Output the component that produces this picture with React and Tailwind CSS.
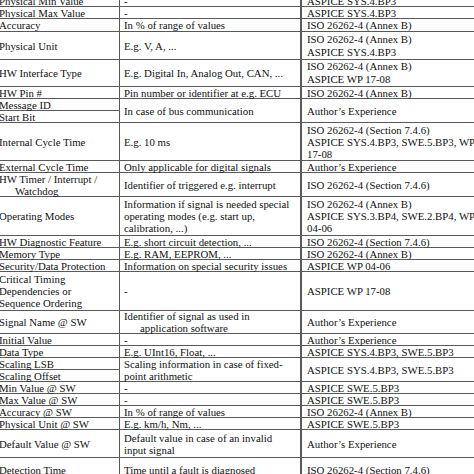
const rows = [
  { a: 'Physical Min Value', b: '-', c: ['ASPICE SYS.4.BP3'] },
  { a: 'Physical Max Value', b: '-', c: ['ASPICE SYS.4.BP3'] },
  { a: 'Accuracy', b: 'In % of range of values', c: ['ISO 26262-4 (Annex B)'] },
  { a: 'Physical Unit', b: 'E.g. V, A, ...', c: ['ISO 26262-4 (Annex B)', 'ASPICE SYS.4.BP3'], tall: true },
  { a: 'HW Interface Type', b: 'E.g. Digital In, Analog Out, CAN, ...', c: ['ISO 26262-4 (Annex B)', 'ASPICE WP 17-08'], tall: true },
  { a: 'HW Pin #', b: 'Pin number or identifier at e.g. ECU', c: ['ISO 26262-4 (Annex B)'] },
  { a: 'Message ID', b: 'In case of bus communication', c: ['Author’s Experience'], span: true },
  { a: 'Start Bit', only: true },
  { a: 'Internal Cycle Time', b: 'E.g. 10 ms', c: ['ISO 26262-4 (Section 7.4.6)', 'ASPICE SYS.4.BP3, SWE.5.BP3, WP', '17-08'] },
  { a: 'External Cycle Time', b: 'Only applicable for digital signals', c: ['Author’s Experience'] },
  { a: ['HW Timer / Interrupt /', 'Watchdog'], indentA: true, b: 'Identifier of triggered e.g. interrupt', c: ['ISO 26262-4 (Section 7.4.6)'] },
  { a: 'Operating Modes', b: ['Information if signal is needed special', 'operating modes (e.g. start up,', 'calibration, ...)'], c: ['ISO 26262-4 (Annex B)', 'ASPICE SYS.3.BP4, SWE.2.BP4, WP', '04-06'] },
  { a: 'HW Diagnostic Feature', b: 'E.g. short circuit detection, ...', c: ['ISO 26262-4 (Section 7.4.6)'] },
  { a: 'Memory Type', b: 'E.g. RAM, EEPROM, ...', c: ['ISO 26262-4 (Annex B)'] },
  { a: 'Security/Data Protection', b: 'Information on special security issues', c: ['ASPICE WP 04-06'] },
  { a: ['Critical Timing', 'Dependencies or', 'Sequence Ordering'], b: '-', c: ['ASPICE WP 17-08'] },
  { a: 'Signal Name @ SW', b: ['Identifier of signal as used in', 'application software'], indentB: true, c: ['Author’s Experience'] },
  { a: 'Initial Value', b: '-', c: ['Author’s Experience'] },
  { a: 'Data Type', b: 'E.g. UInt16, Float, ...', c: ['ASPICE SYS.4.BP3, SWE.5.BP3'] },
  { a: 'Scaling LSB', b: ['Scaling information in case of fixed-', 'point arithmetic'], c: ['ASPICE SYS.4.BP3, SWE.5.BP3'], span: true },
  { a: 'Scaling Offset', only: true },
  { a: 'Min Value @ SW', b: '-', c: ['ASPICE SWE.5.BP3'] },
  { a: 'Max Value @ SW', b: '-', c: ['ASPICE SWE.5.BP3'] },
  { a: 'Accuracy @ SW', b: 'In % of range of values', c: ['ISO 26262-4 (Annex B)'] },
  { a: 'Physical Unit @ SW', b: 'E.g. km/h, Nm, ...', c: ['ASPICE SWE.5.BP3'] },
  { a: 'Default Value @ SW', b: ['Default value in case of an invalid', 'input signal'], c: ['Author’s Experience'] },
  { a: 'Detection Time', b: 'Time until a fault is diagnosed', c: ['ISO 26262-4 (Section 7.4.6)'] },
];

const Lines = ({ text, indent }) => {
  const list = Array.isArray(text) ? text : [text];
  return (
    <div className="flex flex-col">
      {list.map((t, i) => (
        <span key={i} className={`whitespace-nowrap ${indent && i > 0 ? 'pl-[16px]' : ''}`}>{t}</span>
      ))}
    </div>
  );
};

export default function App() {
  return (
    <div className="w-[474px] h-[474px] overflow-hidden bg-white">
      <div className="-mt-[5px] -ml-[3px] w-[560px] grid grid-cols-[122px_180px_256px] grid-rows-[11px_11px_12px_27px_26px_11px_11px_11px_37px_11px_23px_38px_11px_11px_11px_38px_22px_11px_11px_11px_11px_11px_11px_11px_11px_27px_23px] gap-px bg-[#595959] font-['Liberation_Serif',serif] text-[10.8px] leading-[12px] text-[#111]">
        {rows.map((r, i) => (
          <div key={i} className="contents">
            <div className="col-start-1 bg-white flex items-center pl-[2px]">
              <Lines text={r.a} indent={r.indentA} />
            </div>
            {!r.only && (
              <div className={`col-start-2 bg-white flex items-center pl-[4px] ${r.span ? 'row-span-2' : ''}`}>
                <Lines text={r.b} indent={r.indentB} />
              </div>
            )}
            {!r.only && (
              <div className={`col-start-3 bg-white border-l border-[#595959] flex items-center pl-[5px] ${r.span ? 'row-span-2' : ''} ${r.tall ? 'leading-[13px]' : ''}`}>
                <Lines text={r.c} />
              </div>
            )}
          </div>
        ))}
      </div>
    </div>
  );
}
